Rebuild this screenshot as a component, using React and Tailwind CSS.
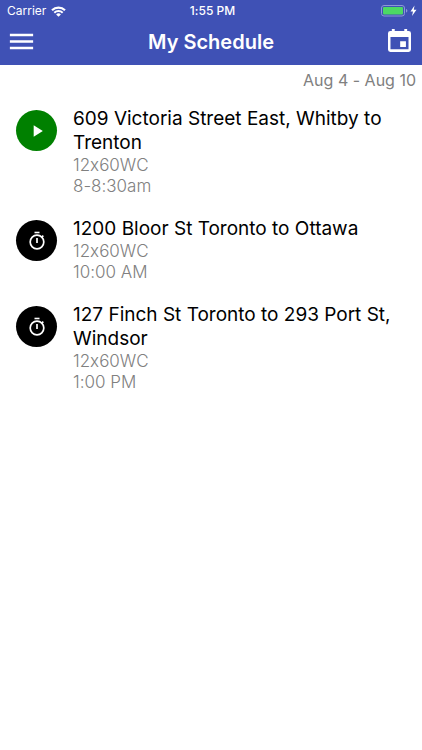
import { MdPlayArrow, MdMenu } from "react-icons/md";

const trips = [
  { title: "609 Victoria Street East, Whitby to Trenton", unit: "12x60WC", time: "8-8:30am", active: true },
  { title: "1200 Bloor St Toronto to Ottawa", unit: "12x60WC", time: "10:00 AM" },
  { title: "127 Finch St Toronto to 293 Port St, Windsor", unit: "12x60WC", time: "1:00 PM" },
];

function WifiIcon() {
  return (
    <svg width="15" height="11" viewBox="0 0 15 11" fill="none" aria-hidden="true">
      <path d="M1 4.2a9.4 9.4 0 0 1 13 0" stroke="white" strokeWidth="2.2" />
      <path d="M3.3 6.7a6 6 0 0 1 8.4 0" stroke="white" strokeWidth="2" />
      <path d="M7.5 10.800 5.100 8.400a3.4 3.4 0 0 1 4.800 0z" fill="white" />
    </svg>
  );
}

function BatteryIcon() {
  return (
    <svg width="37" height="12" viewBox="0 0 37 12" fill="none" aria-hidden="true">
      <rect x="0.5" y="0.5" width="23" height="10.5" rx="2.5" stroke="#8d98d6" />
      <rect x="2" y="2" width="20" height="7.5" rx="1" fill="#4cd964" />
      <path d="M25 4v3.5c1-.3 1.4-.9 1.4-1.75S26 4.300 25 4z" fill="#8d98d6" />
      <path d="M33.500 0.500 29.500 6.500h2.500L31 11l4.500-6.200h-2.700z" fill="white" />
    </svg>
  );
}

function CalendarIcon() {
  return (
    <svg className="size-[23px]" viewBox="0 0 24 24" aria-hidden="true">
      <path
        fill="white"
        fillRule="evenodd"
        d="M4 0h3v2h10V0h3v2h1.500A2.500 2.500 0 0 1 24 4.500v17a2.500 2.500 0 0 1-2.500 2.500h-19A2.500 2.500 0 0 1 0 21.500v-17A2.500 2.500 0 0 1 2.500 2H4zM2.600 8.300v12.900h18.800V8.300zM12.700 12.700h6v6h-6z"
      />
    </svg>
  );
}

function StopwatchIcon() {
  return (
    <svg className="size-5" viewBox="0 0 20 20" fill="none" stroke="white" aria-hidden="true">
      <circle cx="10" cy="11" r="6.800" strokeWidth="1.700" />
      <path d="M7.500 1.500h5" strokeWidth="1.600" />
      <path d="M10 7v5" strokeWidth="1.700" />
      <path d="M14.400 6.600l1.900-1.900" strokeWidth="1.700" />
    </svg>
  );
}

export default function App() {
  return (
    <div className="min-h-screen bg-white font-[Inter,sans-serif] text-black [font-feature-settings:'calt'_0]">
      <header className="bg-[#3f51b5] text-white">
        <div className="grid h-[22px] grid-cols-3 items-center pl-[7px] pr-1 text-[12px]">
          <div className="flex items-center gap-[5px]">
            <span>Carrier</span>
            <WifiIcon />
          </div>
          <span className="text-center font-medium">1:55 PM</span>
          <div className="flex justify-end">
            <BatteryIcon />
          </div>
        </div>
        <div className="grid h-[43px] grid-cols-[1fr_auto_1fr] items-center px-[11px] pb-1">
          <button type="button" aria-label="Menu" className="-ml-[5px] flex justify-self-start">
            <MdMenu className="size-[31px]" />
          </button>
          <h1 className="text-[20px] font-semibold leading-6">My Schedule</h1>
          <button type="button" aria-label="Calendar" className="flex justify-self-end pb-0.5">
            <CalendarIcon />
          </button>
        </div>
      </header>
      <main>
        <p className="px-[6px] pt-[5px] text-right text-[16px] leading-[21px] text-[#808080]">Aug 4 - Aug 10</p>
        <ul className="flex flex-col gap-5 px-4 pt-4">
          {trips.map((trip) => (
            <li key={trip.title} className="flex gap-4">
              <span
                className={
                  "mt-[3px] flex size-[41px] shrink-0 items-center justify-center rounded-full text-white " +
                  (trip.active ? "bg-[#008000]" : "bg-black")
                }
              >
                {trip.active ? <MdPlayArrow className="size-5" /> : <StopwatchIcon />}
              </span>
              <div>
                <h2 className="text-[19px] leading-6">{trip.title}</h2>
                <p className="text-[17px] font-light leading-[21px] text-[#808080]">{trip.unit}</p>
                <p className="text-[17px] font-light leading-[21px] text-[#808080]">{trip.time}</p>
              </div>
            </li>
          ))}
        </ul>
      </main>
    </div>
  );
}
